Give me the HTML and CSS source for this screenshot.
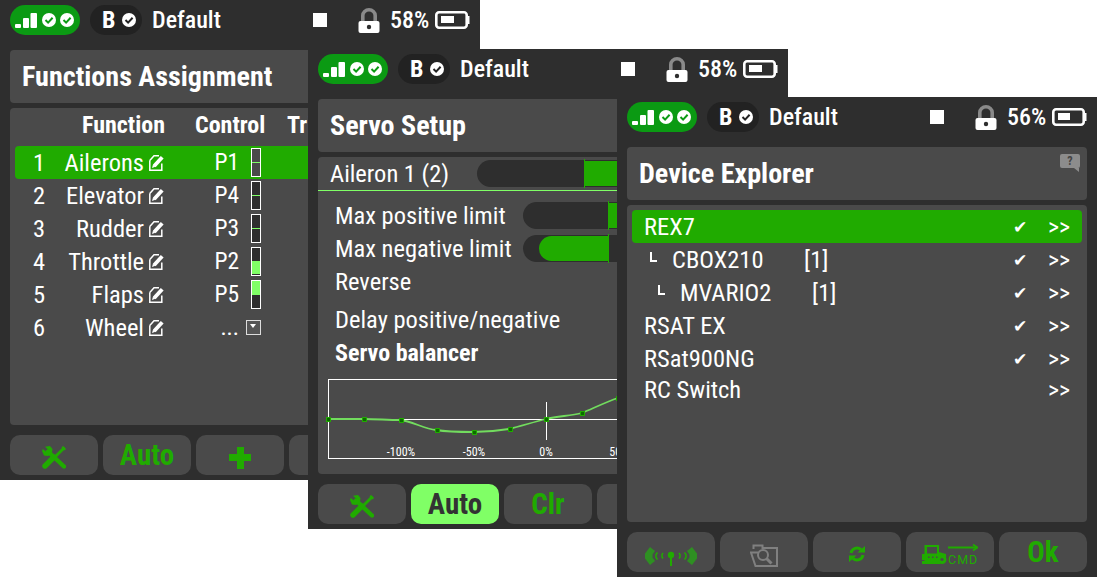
FILE: index.html
```html
<!DOCTYPE html>
<html lang="en">
<head>
<meta charset="utf-8">
<title>Radio screens</title>
<link rel="stylesheet" href="styles.css">
</head>
<body>
<svg class="defs" width="0" height="0" aria-hidden="true">
  <defs>
    <symbol id="i-status" viewBox="0 0 70 30">
      <rect x="5" y="19" width="6" height="4" rx="1" fill="#fff"/>
      <rect x="13" y="13" width="6" height="10" rx="1" fill="#fff"/>
      <rect x="20.500" y="8" width="6.500" height="15" rx="1" fill="#fff"/>
      <circle cx="39" cy="15" r="7" fill="#fff"/>
      <path d="M35.500 15l2.600 2.600 4.500-4.800" fill="none" stroke="#0b9a13" stroke-width="2"/>
      <circle cx="57" cy="15" r="7" fill="#fff"/>
      <path d="M53.500 15l2.600 2.600 4.500-4.800" fill="none" stroke="#0b9a13" stroke-width="2"/>
    </symbol>
    <symbol id="i-check" viewBox="0 0 14 14">
      <circle cx="7" cy="7" r="7" fill="#fff"/>
      <path d="M3.500 7l2.600 2.600 4.500-4.800" fill="none" stroke="#222" stroke-width="2"/>
    </symbol>
    <symbol id="i-lock" viewBox="0 0 22 25">
      <path d="M4.800 13V7.500a6.200 5.700 0 0 1 12.400 0V13" fill="none" stroke="#8a8a8a" stroke-width="3.600"/>
      <rect x="0.500" y="13" width="21" height="12" rx="2" fill="#fff"/>
      <circle cx="11" cy="19" r="2.200" fill="#2e2e2e"/>
    </symbol>
    <symbol id="i-battery" viewBox="0 0 35 18">
      <path d="M4 1.300H29a2.700 2.700 0 0 1 2.700 2.700V14a2.700 2.700 0 0 1-2.700 2.700H4A2.700 2.700 0 0 1 1.300 14V4A2.700 2.700 0 0 1 4 1.300z" fill="none" stroke="#fff" stroke-width="2.600"/>
      <rect x="32" y="5" width="2.500" height="8" fill="#fff"/>
    </symbol>
    <symbol id="i-edit" viewBox="0 0 16 17">
      <path d="M.8 6.500V16.200H12.800V9.500M.8 6.500L5 1.800H10" fill="none" stroke="#fff" stroke-width="1.500"/>
      <path d="M5.200 12L13.200 3.300" stroke="#fff" stroke-width="3.800"/>
      <path d="M3 14l1-3.500 2.400 2.300z" fill="#fff"/>
    </symbol>
    <symbol id="i-tools" viewBox="0 0 24 23">
      <path d="M6 5.500L22 20.500" stroke="#20ab00" stroke-width="4.400" stroke-linecap="round"/>
      <path d="M3 .8L8 0 10.500 3 9.800 7.800 6 10 2 9.500 0 5 .8 3 4.500 6 6.500 4z" fill="#20ab00"/>
      <path d="M22.500 1.500L12 12" stroke="#20ab00" stroke-width="2.800"/>
      <path d="M12 11L3 20" stroke="#20ab00" stroke-width="5.400" stroke-linecap="round"/>
      <path d="M21 0L24 3 22.500 4.500 19.500 1.500z" fill="#20ab00"/>
    </symbol>
    <symbol id="i-antenna" viewBox="0 0 52 20">
      <g fill="#2e8f22">
        <path d="M5 1L0 7.500v5L5 19l5-4-2.500-3.500v-3L10 5z"/>
        <path d="M47 1L52 7.500v5L47 19l-5-4 2.500-3.500v-3L42 5z"/>
      </g>
      <g fill="none" stroke="#20ab00" stroke-width="1.500">
        <path d="M12.500 6.500L11 8.500v3l1.500 2M39.500 6.500L41 8.500v3l-1.500 2"/>
        <path d="M18 7l-1 1.500v2.500l1 1.500M34 7l1 1.500v2.500l-1 1.500"/>
      </g>
      <circle cx="26" cy="9" r="3.200" fill="#20ab00"/>
      <rect x="25" y="9" width="2" height="11" fill="#20ab00"/>
    </symbol>
    <symbol id="i-folder" viewBox="0 0 28 23">
      <path d="M3.500 5V1.500h9V4H27V22H5.500L1 8.500H8" fill="none" stroke="#808080" stroke-width="2"/>
      <circle cx="13" cy="11" r="5" fill="#4a4a4a" stroke="#808080" stroke-width="2"/>
      <path d="M16.500 14.500l5 5" stroke="#808080" stroke-width="3"/>
    </symbol>
    <symbol id="i-refresh" viewBox="0 0 16 16">
      <path d="M2 7a6 6 0 0 1 10-3.300" fill="none" stroke="#20ab00" stroke-width="3"/>
      <path d="M8.500 6.500H16V0z" fill="#20ab00"/>
      <path d="M14 9a6 6 0 0 1-10 3.300" fill="none" stroke="#20ab00" stroke-width="3"/>
      <path d="M7.500 9.500H0V16z" fill="#20ab00"/>
    </symbol>
    <symbol id="i-cmd" viewBox="0 0 56 20">
      <path d="M2.500 10V1H17v7l7 2v7H2.500z" fill="#20ab00"/>
      <path d="M0 10h4v6H0z" fill="#20ab00"/>
      <rect x="5" y="3" width="10" height="6.500" fill="#4a4a4a"/>
      <rect x="6" y="12.500" width="1.500" height="1.500" fill="#4a4a4a"/>
      <rect x="10" y="12.500" width="1.500" height="1.500" fill="#4a4a4a"/>
      <rect x="14" y="12.500" width="1.500" height="1.500" fill="#4a4a4a"/>
      <rect x="0" y="17" width="18" height="3" fill="#20ab00"/>
      <circle cx="20" cy="15.500" r="4.500" fill="#20ab00"/>
      <circle cx="20" cy="15.500" r="1.600" fill="#4a4a4a"/>
      <path d="M26 3.500h29" stroke="#20ab00" stroke-width="2"/>
      <path d="M51 .5l4.500 3-4.500 3" fill="none" stroke="#20ab00" stroke-width="1.700"/>
      <text x="26" y="19.500" class="cmd-text">CMD</text>
    </symbol>
  </defs>
</svg>

<section class="screen screen-a">
  <header class="status">
    <svg class="pill-status"><use href="#i-status"/></svg>
    <div class="pill-mode"><span class="mode-letter">B</span><svg class="mode-check"><use href="#i-check"/></svg></div>
    <span class="model">Default</span>
    <span class="stop"></span>
    <svg class="lock"><use href="#i-lock"/></svg>
    <span class="percent">58%</span>
    <span class="battery"><svg class="battery-frame"><use href="#i-battery"/></svg><span class="battery-level level-58"></span></span>
  </header>
  <h1 class="title">Functions Assignment</h1>
  <main class="card">
    <div class="fn-head">
      <span class="h-function">Function</span>
      <span class="h-control">Control</span>
      <span class="h-trim">Trim</span>
    </div>
    <div class="fn-row selected">
      <span class="fn-num">1</span><span class="fn-name">Ailerons</span><svg class="edit"><use href="#i-edit"/></svg><span class="fn-ctl">P1</span>
      <span class="meter meter-sel"><span class="meter-mid"></span></span>
    </div>
    <div class="fn-row">
      <span class="fn-num">2</span><span class="fn-name">Elevator</span><svg class="edit"><use href="#i-edit"/></svg><span class="fn-ctl">P4</span>
      <span class="meter"><span class="meter-mid"></span></span>
    </div>
    <div class="fn-row">
      <span class="fn-num">3</span><span class="fn-name">Rudder</span><svg class="edit"><use href="#i-edit"/></svg><span class="fn-ctl">P3</span>
      <span class="meter"><span class="meter-mid"></span></span>
    </div>
    <div class="fn-row">
      <span class="fn-num">4</span><span class="fn-name">Throttle</span><svg class="edit"><use href="#i-edit"/></svg><span class="fn-ctl">P2</span>
      <span class="meter"><span class="meter-fill meter-low"></span><span class="meter-mid"></span></span>
    </div>
    <div class="fn-row">
      <span class="fn-num">5</span><span class="fn-name">Flaps</span><svg class="edit"><use href="#i-edit"/></svg><span class="fn-ctl">P5</span>
      <span class="meter"><span class="meter-fill meter-high"></span><span class="meter-mid"></span></span>
    </div>
    <div class="fn-row">
      <span class="fn-num">6</span><span class="fn-name">Wheel</span><svg class="edit"><use href="#i-edit"/></svg><span class="fn-ctl">...</span>
      <span class="dropdown"></span>
    </div>
  </main>
  <footer class="buttons">
    <button class="btn"><svg class="ic-tools"><use href="#i-tools"/></svg></button>
    <button class="btn">Auto</button>
    <button class="btn"><span class="plus"></span></button>
    <button class="btn"></button>
    <button class="btn"></button>
  </footer>
</section>

<section class="screen screen-b">
  <header class="status">
    <svg class="pill-status"><use href="#i-status"/></svg>
    <div class="pill-mode"><span class="mode-letter">B</span><svg class="mode-check"><use href="#i-check"/></svg></div>
    <span class="model">Default</span>
    <span class="stop"></span>
    <svg class="lock"><use href="#i-lock"/></svg>
    <span class="percent">58%</span>
    <span class="battery"><svg class="battery-frame"><use href="#i-battery"/></svg><span class="battery-level level-58"></span></span>
  </header>
  <h1 class="title">Servo Setup</h1>
  <main class="card card-servo">
    <div class="servo-head">
      <span class="servo-name">Aileron 1 (2)</span>
      <div class="track track-head"><span class="track-fill fill-head"></span><span class="tick tick-head"></span></div>
    </div>
    <div class="servo-row r-pos">
      <span class="servo-label">Max positive limit</span>
      <div class="track track-limit"><span class="track-fill fill-pos"></span><span class="tick tick-limit"></span></div>
    </div>
    <div class="servo-row r-neg">
      <span class="servo-label">Max negative limit</span>
      <div class="track track-limit"><span class="track-fill fill-neg"></span><span class="tick tick-limit"></span></div>
    </div>
    <div class="servo-row r-rev"><span class="servo-label">Reverse</span></div>
    <div class="servo-row r-delay"><span class="servo-label">Delay positive/negative</span></div>
    <div class="servo-row r-bal"><span class="servo-label bold">Servo balancer</span></div>
    <svg class="graph" viewBox="0 0 480 80" width="480" height="80">
      <rect x="0.500" y="0.500" width="478" height="79" fill="none" stroke="#fff"/>
      <path d="M0 40.500H478" stroke="#fff"/>
      <path d="M218.500 23V61" stroke="#fff"/>
      <path d="M0 40C12 40 26 40 36 40 48 40 60 41 72 41 84 42 96 50 108 51 120 53 132 53 145 53 157 53 169 52 181 50 193 47 206 43 218 40 230 37 242 37 254 34 266 29 278 23 290 19" fill="none" stroke="#72dc5e" stroke-width="1.800"/>
      <g fill="#0c6a00" stroke="#20ab00">
        <rect x="-1.500" y="38.500" width="4" height="4"/><rect x="34.500" y="38.500" width="4" height="4"/><rect x="71.500" y="39.500" width="4" height="4"/>
        <rect x="107.500" y="49.500" width="4" height="4"/><rect x="144.500" y="51.500" width="4" height="4"/><rect x="180.500" y="48.500" width="4" height="4"/>
        <rect x="216.500" y="38.500" width="4" height="4"/><rect x="252.500" y="32.500" width="4" height="4"/><rect x="288.500" y="17.500" width="4" height="4"/>
      </g>
      <g class="graph-label">
        <text x="73" y="77" text-anchor="middle">-100%</text>
        <text x="146" y="77" text-anchor="middle">-50%</text>
        <text x="218" y="77" text-anchor="middle">0%</text>
        <text x="291" y="77" text-anchor="middle">50%</text>
      </g>
    </svg>
  </main>
  <footer class="buttons">
    <button class="btn"><svg class="ic-tools"><use href="#i-tools"/></svg></button>
    <button class="btn btn-on">Auto</button>
    <button class="btn">Clr</button>
    <button class="btn"></button>
    <button class="btn"></button>
  </footer>
</section>

<section class="screen screen-c">
  <header class="status">
    <svg class="pill-status"><use href="#i-status"/></svg>
    <div class="pill-mode"><span class="mode-letter">B</span><svg class="mode-check"><use href="#i-check"/></svg></div>
    <span class="model">Default</span>
    <span class="stop"></span>
    <svg class="lock"><use href="#i-lock"/></svg>
    <span class="percent">56%</span>
    <span class="battery"><svg class="battery-frame"><use href="#i-battery"/></svg><span class="battery-level level-56"></span></span>
  </header>
  <h1 class="title">Device Explorer
    <span class="help"><span class="help-q">?</span></span>
  </h1>
  <main class="card card-dev">
    <div class="dev-row selected"><span class="dev-name">REX7</span><span class="dev-ok">✔</span><span class="dev-go">&gt;&gt;</span></div>
    <div class="dev-row depth-1"><span class="dev-tree"></span><span class="dev-name">CBOX210</span><span class="dev-count">[1]</span><span class="dev-ok">✔</span><span class="dev-go">&gt;&gt;</span></div>
    <div class="dev-row depth-2"><span class="dev-tree"></span><span class="dev-name">MVARIO2</span><span class="dev-count">[1]</span><span class="dev-ok">✔</span><span class="dev-go">&gt;&gt;</span></div>
    <div class="dev-row"><span class="dev-name">RSAT EX</span><span class="dev-ok">✔</span><span class="dev-go">&gt;&gt;</span></div>
    <div class="dev-row"><span class="dev-name">RSat900NG</span><span class="dev-ok">✔</span><span class="dev-go">&gt;&gt;</span></div>
    <div class="dev-row dev-last"><span class="dev-name">RC Switch</span><span class="dev-go">&gt;&gt;</span></div>
  </main>
  <footer class="buttons">
    <button class="btn"><svg class="ic-antenna"><use href="#i-antenna"/></svg></button>
    <button class="btn"><svg class="ic-folder"><use href="#i-folder"/></svg></button>
    <button class="btn"><svg class="ic-refresh"><use href="#i-refresh"/></svg></button>
    <button class="btn"><svg class="ic-cmd"><use href="#i-cmd"/></svg></button>
    <button class="btn">Ok</button>
  </footer>
</section>
</body>
</html>
```
FILE: styles.css
```css
* { box-sizing: border-box; }
html, body { margin: 0; padding: 0; }
body {
  width: 1098px; height: 578px; overflow: hidden; background: #fff; position: relative;
  font-family: Roboto, "Liberation Sans", sans-serif; font-stretch: 75%; color: #fff;
}
.defs { position: absolute; }

.screen {
  position: absolute; width: 480px; height: 480px; background: #2e2e2e; overflow: hidden;
  display: flex; flex-direction: column; padding: 5px 10px;
}
.screen-a { left: 0; top: 0; }
.screen-b { left: 308px; top: 49px; }
.screen-c { left: 617px; top: 97px; }

.status { display: flex; align-items: center; height: 30px; flex: none; }
.pill-status { width: 70px; height: 30px; background: #0b9a13; border-radius: 15px; flex: none; }
.pill-mode {
  width: 52px; height: 30px; margin-left: 10px; background: #222; border-radius: 15px;
  display: flex; align-items: center; flex: none; padding-left: 12px;
}
.mode-letter { font-size: 24px; font-weight: 700; width: 20px; }
.mode-check { width: 14px; height: 14px; }
.model { font-size: 24px; font-weight: 500; margin-left: 10px; width: 161px; flex: none; }
.stop { width: 14px; height: 14px; background: #fff; flex: none; }
.lock { width: 22px; height: 25px; margin-left: 31px; flex: none; }
.percent { font-size: 24px; font-weight: 500; margin-left: 10px; width: 45px; flex: none; }
.battery { position: relative; width: 35px; height: 18px; flex: none; }
.battery-frame { width: 35px; height: 18px; display: block; }
.battery-level { position: absolute; left: 6px; top: 5px; height: 7px; background: #fff; }
.level-58 { width: 13px; }
.level-56 { width: 12px; }

.title {
  position: relative; margin: 15px 0 0; height: 53px; flex: none; background: #4a4a4a; border-radius: 4px;
  padding-left: 12px; font-size: 28.100px; font-weight: 700; line-height: 53px; white-space: nowrap;
}
.card {
  position: relative; margin-top: 5px; height: 317px; flex: none; background: #4a4a4a; border-radius: 4px; padding: 5px;
  overflow: hidden;
}
.buttons { display: flex; gap: 5px; margin-top: 10px; flex: none; }
.btn {
  flex: none; width: 88px; height: 40px; border: 0; padding: 0; background: #4a4a4a; border-radius: 10px;
  font-family: Roboto, sans-serif; font-size: 29px; font-weight: 700; line-height: 40px; font-stretch: 75%; color: #20ab00;
  display: flex; align-items: center; justify-content: center;
}
.btn-on { background: #80ff66; color: #333; }
.ic-tools { width: 24px; height: 23px; margin-top: 5px; }
.plus { display: block; width: 22px; height: 22px; margin-top: 5px; background:
  linear-gradient(#20ab00,#20ab00) center/7px 22px no-repeat,
  linear-gradient(#20ab00,#20ab00) center/22px 7px no-repeat; border-radius: 3px; }
.ic-antenna { width: 52px; height: 20px; margin-top: 8px; }
.ic-folder { width: 28px; height: 23px; margin-top: 6px; }
.ic-refresh { width: 16px; height: 16px; margin-top: 4px; }
.ic-cmd { width: 56px; height: 20px; margin-top: 4px; }
.cmd-text { font-family: Roboto, sans-serif; font-size: 12.500px; font-weight: 400; font-stretch: 100%; fill: #20ab00; letter-spacing: 1px; }

/* Functions */
.fn-head { position: relative; height: 33px; font-size: 24px; font-weight: 700; line-height: 25px; white-space: nowrap; }
.h-function { position: absolute; right: 300px; }
.h-control { position: absolute; left: 180px; }
.h-trim { position: absolute; left: 272px; }
.fn-row {
  display: flex; align-items: center; height: 33px; width: 450px; border-radius: 4px; font-size: 24.500px; line-height: 35px; font-weight: 400;
}
.selected { background: #20ab00; }
.fn-num { width: 48px; text-align: center; flex: none; }
.fn-name { width: 81px; text-align: right; flex: none; white-space: nowrap; }
.edit { width: 16px; height: 17px; margin-left: 5px; flex: none; }
.fn-ctl { width: 74px; text-align: right; flex: none; font-size: 23.500px; }
.meter { position: relative; width: 10px; height: 29px; margin-left: 12px; border: 1px solid #fff; background: #2e2e2e; flex: none; }
.meter-sel { background: #4a4a4a; }
.meter-mid { position: absolute; left: 0; right: 0; top: 13px; height: 1px; background: #80ff66; }
.meter-fill { position: absolute; left: 0; right: 0; background: #80ff66; }
.meter-low { top: 13px; height: 13px; }
.meter-high { top: 0; height: 14px; }
.dropdown { position: relative; width: 15px; height: 15px; margin-left: 7px; border: 1px solid #ddd; background: #555; flex: none; }
.dropdown::after { content: ""; position: absolute; left: 3px; top: 3px; border: 3.500px solid transparent; border-top: 4px solid #fff; border-bottom: 0; }

/* Servo */
.card-servo { padding: 0; }
.servo-head { display: flex; height: 34px; border-bottom: 1px solid #80ff66; padding-left: 12px; font-size: 24.500px; line-height: 35px; align-items: center; }
.servo-name { width: 147px; flex: none; white-space: nowrap; }
.track { position: relative; background: #2e2e2e; border-radius: 14px 0 0 14px; height: 27px; flex: none; }
.track-head { width: 300px; }
.track-limit { width: 272px; }
.track-fill { position: absolute; top: 1px; bottom: 1px; background: #20ab00; }
.tick { position: absolute; top: -1px; bottom: -1px; width: 1px; background: #20ab00; }
.tick-head { left: 107px; }
.tick-limit { left: 85px; }
.fill-head { left: 107px; right: 0; }
.servo-row { position: absolute; left: 17px; width: 470px; display: flex; align-items: center; font-size: 24.500px; line-height: 29px; height: 27px; white-space: nowrap; }
.servo-label { flex: none; width: 188px; }
.bold { font-weight: 700; font-size: 24px; }
.r-pos { top: 45px; }
.r-neg { top: 78px; }
.r-rev { top: 111px; }
.r-delay { top: 149px; }
.r-bal { top: 183px; }
.fill-pos { left: 85px; right: 0; }
.fill-neg { left: 16px; width: 69px; border-radius: 13px 0 0 13px; }
.graph { position: absolute; left: 10px; top: 222px; overflow: visible; }
.graph-label text { font-family: Roboto, sans-serif; font-size: 12px; font-weight: 400; font-stretch: 75%; fill: #fff; }

/* Devices */
.dev-row { position: relative; display: flex; align-items: center; height: 33px; font-size: 24.500px; line-height: 35px; border-radius: 4px; padding-left: 12px; }
.dev-name { white-space: nowrap; }
.depth-1 { padding-left: 40px; }
.depth-2 { padding-left: 48px; }
.dev-tree { position: absolute; top: 9px; width: 7px; height: 10px; border-left: 2px solid #fff; border-bottom: 2px solid #fff; }
.depth-1 .dev-tree { left: 18px; }
.depth-2 .dev-tree { left: 26px; }
.dev-count { position: absolute; left: 172px; }
.depth-2 .dev-count { left: 180px; }
.dev-ok { position: absolute; left: 381px; font-size: 17px; padding-top: 2px; }
.dev-go { position: absolute; left: 416px; font-size: 24px; padding-top: 2px; }
.dev-last { height: 29px; }
.help { position: absolute; right: 7px; top: 7px; width: 20px; height: 14px; background: #8c8c8c; border-radius: 2px; display: flex; justify-content: center; align-items: center; }
.help::after { content: ""; position: absolute; right: 1px; bottom: -4px; border-top: 4px solid #8c8c8c; border-left: 5px solid transparent; }
.help-q { font-size: 12px; line-height: 14px; font-weight: 700; color: #444; }
```
